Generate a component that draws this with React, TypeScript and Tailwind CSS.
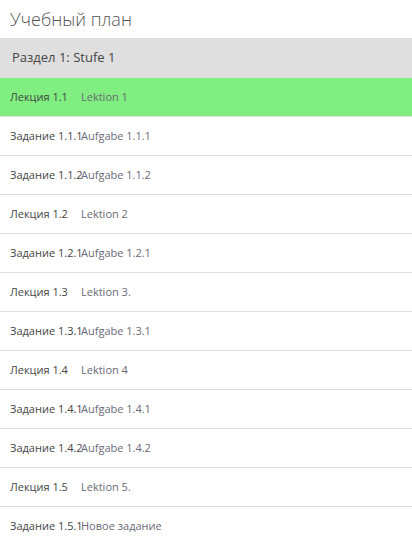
import React from "react";

const rows: { a: string; b: string; active?: boolean }[] = [
  { a: "Лекция 1.1", b: "Lektion 1", active: true },
  { a: "Задание 1.1.1", b: "Aufgabe 1.1.1" },
  { a: "Задание 1.1.2", b: "Aufgabe 1.1.2" },
  { a: "Лекция 1.2", b: "Lektion 2" },
  { a: "Задание 1.2.1", b: "Aufgabe 1.2.1" },
  { a: "Лекция 1.3", b: "Lektion 3." },
  { a: "Задание 1.3.1", b: "Aufgabe 1.3.1" },
  { a: "Лекция 1.4", b: "Lektion 4" },
  { a: "Задание 1.4.1", b: "Aufgabe 1.4.1" },
  { a: "Задание 1.4.2", b: "Aufgabe 1.4.2" },
  { a: "Лекция 1.5", b: "Lektion 5." },
  { a: "Задание 1.5.1", b: "Новое задание" },
];

export default function App() {
  return (
    <div
      className="w-[412px] h-[539px] overflow-hidden bg-white"
      style={{ fontFamily: '"Open Sans", "Noto Sans", sans-serif' }}
    >
      <div className="h-[38px] px-[10px] flex items-center text-[18px] font-light text-[#555]">
        Учебный план
      </div>
      <div className="h-[40px] bg-[#dfdfdf] px-[12px] flex items-center text-[13px] font-medium text-[#444]">
        Раздел 1: Stufe 1
      </div>
      {rows.map((r, i) => (
        <div
          key={i}
          className={
            r.active
              ? "h-[39px] bg-[#80ee80] border-b border-[#dddddd] px-[10px] flex items-center text-[11px]"
              : "h-[39px] bg-white border-b border-[#dddddd] px-[10px] flex items-center text-[11px]"
          }
        >
          <span className="w-[71px] shrink-0 whitespace-nowrap text-[#444]">{r.a}</span>
          <span className="whitespace-nowrap text-[#6a6a78]">{r.b}</span>
        </div>
      ))}
    </div>
  );
}
